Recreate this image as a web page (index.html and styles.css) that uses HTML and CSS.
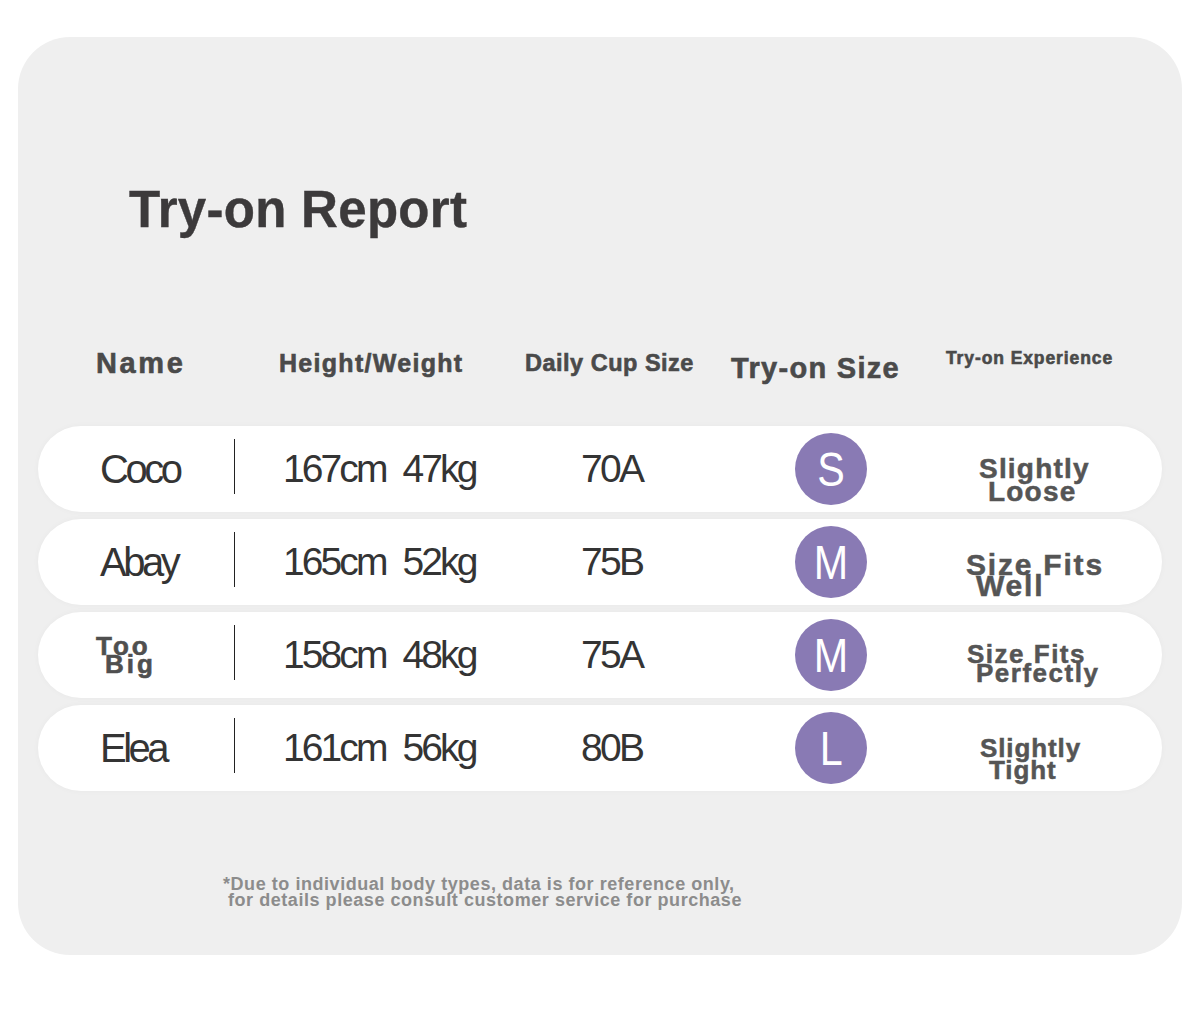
FILE: index.html
```html
<!DOCTYPE html>
<html lang="en">
<head>
<meta charset="utf-8">
<title>Try-on Report</title>
<link rel="stylesheet" href="styles.css">
</head>
<body>
<main class="card">
  <h1 class="title">Try-on Report</h1>

  <div class="head">
    <span class="h-name">Name</span>
    <span class="h-hw">Height/Weight</span>
    <span class="h-cup">Daily Cup Size</span>
    <span class="h-size">Try-on Size</span>
    <span class="h-exp">Try-on Experience</span>
  </div>

  <div class="rows">
    <div class="row">
      <span class="name">Coco</span>
      <span class="divider"></span>
      <span class="hw">167cm 47kg</span>
      <span class="cup">70A</span>
      <span class="size"><span class="dot"><span class="dot-l">S</span></span></span>
      <span class="exp exp-1"><span class="l1">Slightly</span><span class="l2">Loose</span></span>
    </div>
    <div class="row">
      <span class="name">Abay</span>
      <span class="divider"></span>
      <span class="hw">165cm 52kg</span>
      <span class="cup">75B</span>
      <span class="size"><span class="dot"><span class="dot-l">M</span></span></span>
      <span class="exp exp-2"><span class="l1">Size Fits</span><span class="l2">Well</span></span>
    </div>
    <div class="row">
      <span class="name name-bold"><span class="l1">Too</span><span class="l2">Big</span></span>
      <span class="divider"></span>
      <span class="hw">158cm 48kg</span>
      <span class="cup">75A</span>
      <span class="size"><span class="dot"><span class="dot-l">M</span></span></span>
      <span class="exp exp-3"><span class="l1">Size Fits</span><span class="l2">Perfectly</span></span>
    </div>
    <div class="row">
      <span class="name">Elea</span>
      <span class="divider"></span>
      <span class="hw">161cm 56kg</span>
      <span class="cup">80B</span>
      <span class="size"><span class="dot"><span class="dot-l">L</span></span></span>
      <span class="exp exp-4"><span class="l1">Slightly</span><span class="l2">Tight</span></span>
    </div>
  </div>

  <p class="note"><span class="n1">*Due to individual body types, data is for reference only,</span><span class="n2">for details please consult customer service for purchase</span></p>
</main>
</body>
</html>
```

FILE: styles.css
```css
* { box-sizing: border-box; }

html, body {
  margin: 0;
  padding: 0;
  background: #ffffff;
  font-family: "Liberation Sans", Arial, sans-serif;
}

.card {
  margin: 37px 18px 0;
  height: 918px;
  background: #efefef;
  border-radius: 52px;
  padding: 143px 20px 0;
  display: flex;
  flex-direction: column;
}

.title {
  margin: 0 0 0 91px;
  font-size: 51px;
  line-height: 60px;
  font-weight: 700;
  letter-spacing: 0.3px;
  color: #3c3a3b;
  -webkit-text-stroke: 0.4px #3c3a3b;
}

.head {
  margin-top: 102px;
  height: 40px;
  display: grid;
  grid-template-columns: 58px 183px 246px 206px 215px 1fr;
  align-items: center;
  font-weight: 700;
  color: #4a4a4a;
  white-space: nowrap;
  -webkit-text-stroke: 0.6px #4a4a4a;
}

.h-name { grid-column: 2; font-size: 29px; letter-spacing: 2.6px; }
.h-hw { font-size: 25px; letter-spacing: 1.3px; }
.h-cup { font-size: 23.5px; letter-spacing: 0.5px; }
.h-size { font-size: 29px; letter-spacing: 1.3px; margin-top: 10px; }
.h-exp { font-size: 17.5px; letter-spacing: 0.9px; margin-top: -10px; }

.rows {
  margin-top: 44px;
  display: flex;
  flex-direction: column;
  gap: 7px;
}

.row {
  height: 86px;
  background: #ffffff;
  border-radius: 43px;
  box-shadow: 0 0 6px rgba(0, 0, 0, 0.03);
  display: grid;
  grid-template-columns: 62px 134px 1px 346px 214px 171px 1fr;
  align-items: center;
  color: #343434;
  white-space: nowrap;
}

.name {
  grid-column: 2;
  font-size: 40px;
  letter-spacing: -3.5px;
}

.name-bold {
  display: flex;
  flex-direction: column;
  font-size: 26px;
  font-weight: 700;
  letter-spacing: 3px;
  line-height: 18px;
  color: #4f4f4f;
  -webkit-text-stroke: 0.6px #4f4f4f;
  margin-left: -4px;
}
.name-bold .l2 { padding-left: 9px; }

.divider {
  width: 1px;
  height: 55px;
  background: #222222;
  margin-top: -6px;
}

.hw {
  padding-left: 48px;
  font-size: 39px;
  letter-spacing: -2.9px;
  word-spacing: 9px;
}

.cup {
  font-size: 39px;
  letter-spacing: -2.7px;
}

.size { display: flex; }

.dot {
  width: 72px;
  height: 72px;
  border-radius: 50%;
  background: #897ab4;
  color: #ffffff;
  display: flex;
  align-items: center;
  justify-content: center;
}

.dot-l {
  font-size: 48px;
  line-height: 1;
  transform: scaleX(0.86);
  margin-top: 1px;
}

.exp {
  display: flex;
  flex-direction: column;
  align-items: flex-start;
  font-weight: 700;
  color: #555555;
  -webkit-text-stroke: 0.5px #555555;
}

.exp-1 { font-size: 28px; letter-spacing: 1.2px; line-height: 23px; padding: 21px 0 0 13px; }
.exp-1 .l2 { padding-left: 9px; }

.exp-2 { font-size: 30px; letter-spacing: 1.8px; line-height: 21px; padding-top: 26px; }
.exp-2 .l2 { padding-left: 10px; }

.exp-3 { font-size: 26px; letter-spacing: 1.5px; line-height: 19px; padding: 17px 0 0 1px; }
.exp-3 .l2 { padding-left: 9px; }

.exp-4 { font-size: 26px; letter-spacing: 0.9px; line-height: 22px; padding: 21px 0 0 14px; }
.exp-4 .l2 { padding-left: 9px; }

.note {
  margin: 86px 0 0 185px;
  display: flex;
  flex-direction: column;
  font-size: 18px;
  line-height: 15.5px;
  font-weight: 700;
  letter-spacing: 0.55px;
  color: #8c8c8c;
  white-space: nowrap;
}

.note .n2 { padding-left: 5px; }
```
